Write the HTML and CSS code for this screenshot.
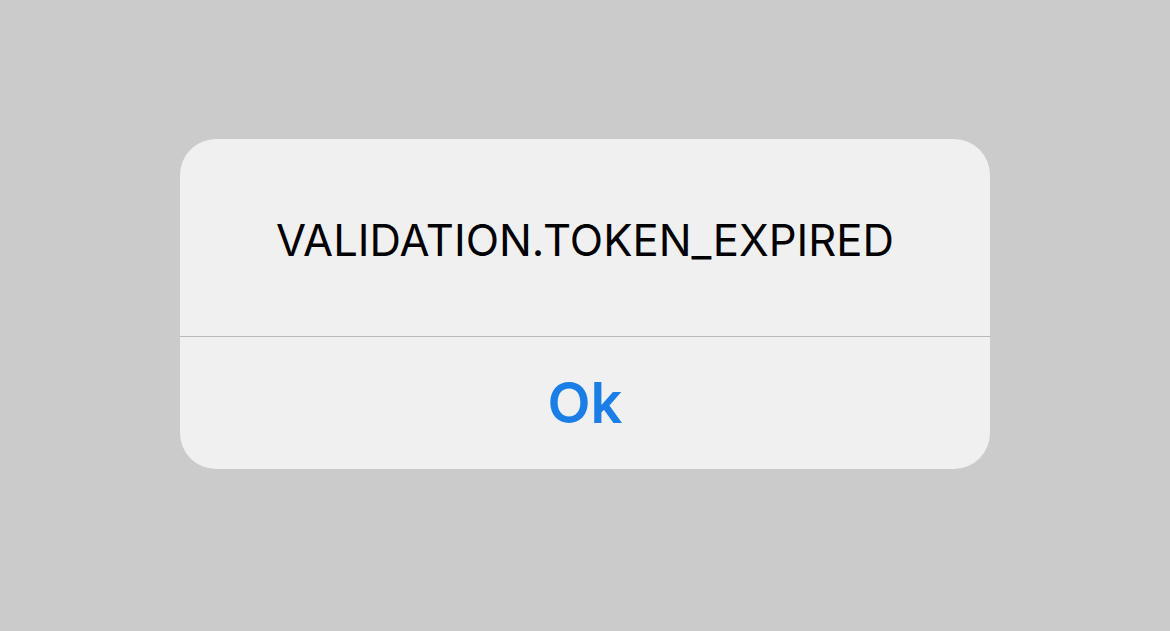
FILE: index.html
```html
<!DOCTYPE html>
<html>
<head>
<meta charset="utf-8">
<link rel="stylesheet" href="styles.css">
</head>
<body>
<div class="screen">
  <div class="alert">
    <div class="message">VALIDATION.TOKEN_EXPIRED</div>
    <div class="actions"><button class="btn">Ok</button></div>
  </div>
</div>
</body>
</html>
```
FILE: styles.css
```css
html, body {
  margin: 0;
  padding: 0;
  background: #cbcbcb;
}
.screen {
  width: 1170px;
  height: 631px;
  display: flex;
  justify-content: center;
  align-items: flex-start;
  padding-top: 139px;
  box-sizing: border-box;
}
.alert {
  width: 810px;
  background: #f0f0f0;
  border-radius: 36px;
  display: flex;
  flex-direction: column;
  overflow: hidden;
}
.message {
  height: 198px;
  box-sizing: border-box;
  padding-top: 6px;
  display: flex;
  align-items: center;
  justify-content: center;
  font-family: Inter, "Liberation Sans", sans-serif;
  font-size: 43.6px;
  color: #000;
  border-bottom: 1.5px solid #b9b9b9;
}
.actions {
  height: 132px;
  display: flex;
  align-items: center;
  justify-content: center;
}
.btn {
  border: 0;
  background: none;
  padding: 0;
  font-family: Inter, "Liberation Sans", sans-serif;
  font-weight: 600;
  font-size: 56px;
  color: #1a7ee6;
}
```
